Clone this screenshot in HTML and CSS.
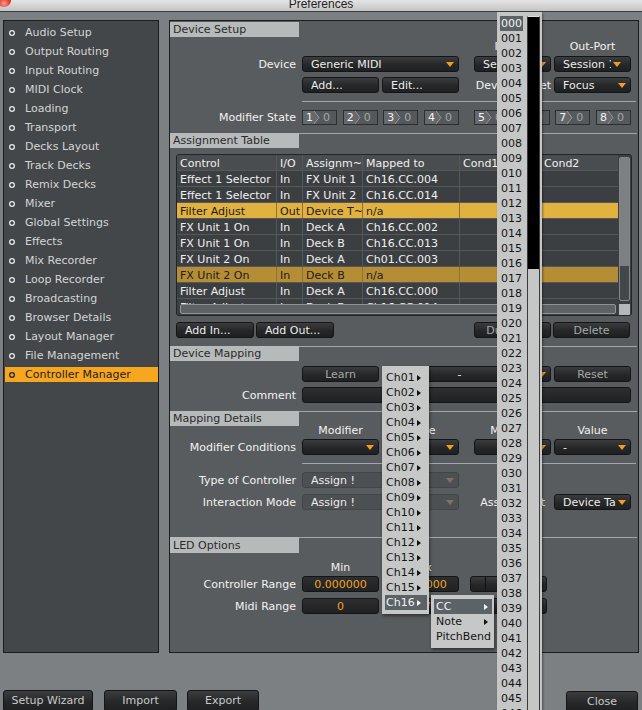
FILE: index.html
```html
<!DOCTYPE html>
<html>
<head>
<meta charset="utf-8">
<title>Preferences</title>
<link rel="stylesheet" href="styles.css">
</head>
<body>
<div class="window">
  <div class="titlebar"><span class="close-btn"></span>Preferences</div>
  <div class="main">
    <nav class="sidebar">
      <div class="nav-item"><span class="dot"></span>Audio Setup</div>
      <div class="nav-item"><span class="dot"></span>Output Routing</div>
      <div class="nav-item"><span class="dot"></span>Input Routing</div>
      <div class="nav-item"><span class="dot"></span>MIDI Clock</div>
      <div class="nav-item"><span class="dot"></span>Loading</div>
      <div class="nav-item"><span class="dot"></span>Transport</div>
      <div class="nav-item"><span class="dot"></span>Decks Layout</div>
      <div class="nav-item"><span class="dot"></span>Track Decks</div>
      <div class="nav-item"><span class="dot"></span>Remix Decks</div>
      <div class="nav-item"><span class="dot"></span>Mixer</div>
      <div class="nav-item"><span class="dot"></span>Global Settings</div>
      <div class="nav-item"><span class="dot"></span>Effects</div>
      <div class="nav-item"><span class="dot"></span>Mix Recorder</div>
      <div class="nav-item"><span class="dot"></span>Loop Recorder</div>
      <div class="nav-item"><span class="dot"></span>Broadcasting</div>
      <div class="nav-item"><span class="dot"></span>Browser Details</div>
      <div class="nav-item"><span class="dot"></span>Layout Manager</div>
      <div class="nav-item"><span class="dot"></span>File Management</div>
      <div class="nav-item active"><span class="dot"></span>Controller Manager</div>
    </nav>

    <section class="content">
      <!-- Device Setup -->
      <div class="sec-head first"><div class="sec-title">Device Setup</div><div class="sec-line"></div></div>
      <div class="frow r-ports"><div></div><div></div><div></div><div class="cap">In-Port</div><div class="cap">Out-Port</div></div>
      <div class="frow r-dev">
        <div class="lbl">Device</div>
        <div class="dd w2 span2"><span class="t">Generic MIDI</span></div>
        <div class="dd"><span class="t">Session 1</span></div>
        <div class="dd"><span class="t clip">Session 1</span></div>
      </div>
      <div class="frow r-add">
        <div></div>
        <div class="btn">Add...</div>
        <div class="btn">Edit...</div>
        <div class="lbl2">Device Target</div>
        <div class="dd"><span class="t">Focus</span></div>
      </div>
      <div class="sep"></div>
      <div class="frow r-mod">
        <div class="lbl">Modifier State</div>
        <div class="mods span2">
          <span class="mod"><b>1</b><svg class="chev" viewBox="0 0 6 13" width="6" height="13"><polygon points="0,0 5,6.5 0,13" fill="#66696b"/><polyline points="0,0 5,6.5 0,13" fill="none" stroke="#95989a"/></svg><em>0</em></span>
          <span class="mod"><b>2</b><svg class="chev" viewBox="0 0 6 13" width="6" height="13"><polygon points="0,0 5,6.5 0,13" fill="#66696b"/><polyline points="0,0 5,6.5 0,13" fill="none" stroke="#95989a"/></svg><em>0</em></span>
          <span class="mod"><b>3</b><svg class="chev" viewBox="0 0 6 13" width="6" height="13"><polygon points="0,0 5,6.5 0,13" fill="#66696b"/><polyline points="0,0 5,6.5 0,13" fill="none" stroke="#95989a"/></svg><em>0</em></span>
          <span class="mod"><b>4</b><svg class="chev" viewBox="0 0 6 13" width="6" height="13"><polygon points="0,0 5,6.5 0,13" fill="#66696b"/><polyline points="0,0 5,6.5 0,13" fill="none" stroke="#95989a"/></svg><em>0</em></span>
        </div>
        <div class="mods span2">
          <span class="mod"><b>5</b><svg class="chev" viewBox="0 0 6 13" width="6" height="13"><polygon points="0,0 5,6.5 0,13" fill="#66696b"/><polyline points="0,0 5,6.5 0,13" fill="none" stroke="#95989a"/></svg><em>0</em></span>
          <span class="mod"><b>6</b><svg class="chev" viewBox="0 0 6 13" width="6" height="13"><polygon points="0,0 5,6.5 0,13" fill="#66696b"/><polyline points="0,0 5,6.5 0,13" fill="none" stroke="#95989a"/></svg><em>0</em></span>
          <span class="mod"><b>7</b><svg class="chev" viewBox="0 0 6 13" width="6" height="13"><polygon points="0,0 5,6.5 0,13" fill="#66696b"/><polyline points="0,0 5,6.5 0,13" fill="none" stroke="#95989a"/></svg><em>0</em></span>
          <span class="mod"><b>8</b><svg class="chev" viewBox="0 0 6 13" width="6" height="13"><polygon points="0,0 5,6.5 0,13" fill="#66696b"/><polyline points="0,0 5,6.5 0,13" fill="none" stroke="#95989a"/></svg><em>0</em></span>
        </div>
      </div>

      <!-- Assignment Table -->
      <div class="sec-head s-assign"><div class="sec-title">Assignment Table</div><div class="sec-line"></div></div>
      <div class="table">
        <div class="tmain">
          <div class="rows">
            <div class="tr head"><span>Control</span><span>I/O</span><span>Assignm~</span><span>Mapped to</span><span>Cond1</span><span>Cond2</span></div>
            <div class="tr"><span>Effect 1 Selector</span><span>In</span><span>FX Unit 1</span><span>Ch16.CC.004</span><span></span><span></span></div>
            <div class="tr"><span>Effect 1 Selector</span><span>In</span><span>FX Unit 2</span><span>Ch16.CC.014</span><span></span><span></span></div>
            <div class="tr hl1"><span>Filter Adjust</span><span>Out</span><span>Device T~</span><span>n/a</span><span></span><span></span></div>
            <div class="tr"><span>FX Unit 1 On</span><span>In</span><span>Deck A</span><span>Ch16.CC.002</span><span></span><span></span></div>
            <div class="tr"><span>FX Unit 1 On</span><span>In</span><span>Deck B</span><span>Ch16.CC.013</span><span></span><span></span></div>
            <div class="tr"><span>FX Unit 2 On</span><span>In</span><span>Deck A</span><span>Ch01.CC.003</span><span></span><span></span></div>
            <div class="tr hl2"><span>FX Unit 2 On</span><span>In</span><span>Deck B</span><span>n/a</span><span></span><span></span></div>
            <div class="tr"><span>Filter Adjust</span><span>In</span><span>Deck A</span><span>Ch16.CC.000</span><span></span><span></span></div>
            <div class="tr"><span>Filter Adjust</span><span>In</span><span>Deck B</span><span>Ch16.CC.014</span><span></span><span></span></div>
          </div>
          <div class="hscroll"><div></div></div>
        </div>
        <div class="vcol">
          <div class="vtrack"><div class="vthumb"></div></div>
          <div class="corner"></div>
        </div>
      </div>
      <div class="btnrow">
        <div class="btn wb">Add In...</div>
        <div class="btn wb">Add Out...</div>
        <div class="btn c dup">Duplicate</div>
        <div class="btn c">Delete</div>
      </div>

      <!-- Device Mapping -->
      <div class="sec-head s-map"><div class="sec-title">Device Mapping</div><div class="sec-line"></div></div>
      <div class="frow r-learn">
        <div></div>
        <div class="btn c">Learn</div>
        <div class="dd w3 span2 ctr"><span class="t">-</span></div>
        <div class="btn c">Reset</div>
      </div>
      <div class="frow r-comment">
        <div class="lbl">Comment</div>
        <div class="fld wide span4"></div>
      </div>

      <!-- Mapping Details -->
      <div class="sec-head s-details"><div class="sec-title">Mapping Details</div><div class="sec-line"></div></div>
      <div class="frow r-caps"><div></div><div class="cap">Modifier</div><div class="cap">Value</div><div class="cap">Modifier</div><div class="cap">Value</div></div>
      <div class="frow r-conds">
        <div class="lbl">Modifier Conditions</div>
        <div class="dd"><span class="t"></span></div>
        <div class="dd"><span class="t"></span></div>
        <div class="dd"><span class="t"></span></div>
        <div class="dd"><span class="t">-</span></div>
      </div>
      <div class="sep s2"></div>
      <div class="frow r-type">
        <div class="lbl">Type of Controller</div>
        <div class="dd dis w2 span2"><span class="t">Assign !</span></div>
      </div>
      <div class="frow r-inter">
        <div class="lbl">Interaction Mode</div>
        <div class="dd dis w2 span2"><span class="t">Assign !</span></div>
        <div class="lbl3">Assignment</div>
        <div class="dd"><span class="t clip2">Device Target</span></div>
      </div>

      <!-- LED Options -->
      <div class="sec-head s-led"><div class="sec-title">LED Options</div><div class="sec-line"></div></div>
      <div class="frow r-minmax"><div></div><div class="cap">Min</div><div class="cap">Max</div></div>
      <div class="frow r-crange">
        <div class="lbl">Controller Range</div>
        <div class="fld">0.000000</div>
        <div class="fld">0.000000</div>
        <div class="toggle"><span class="sq"></span><span class="tl">Invert</span></div>
      </div>
      <div class="frow r-mrange">
        <div class="lbl">Midi Range</div>
        <div class="fld">0</div>
        <div class="fld">127</div>
        <div class="toggle"><span class="sq"></span><span class="tl">Invert</span></div>
      </div>
    </section>
  </div>

  <div class="footer">
    <div class="fbtn wiz">Setup Wizard</div>
    <div class="fbtn imp">Import</div>
    <div class="fbtn exp">Export</div>
    <div class="fbtn cls">Close</div>
  </div>

  <!-- popup: CC number list -->
  <div class="numlist">
    <div class="nums">
      <div class="sel">000</div><div>001</div><div>002</div><div>003</div><div>004</div><div>005</div><div>006</div><div>007</div><div>008</div><div>009</div>
      <div>010</div><div>011</div><div>012</div><div>013</div><div>014</div><div>015</div><div>016</div><div>017</div><div>018</div><div>019</div>
      <div>020</div><div>021</div><div>022</div><div>023</div><div>024</div><div>025</div><div>026</div><div>027</div><div>028</div><div>029</div>
      <div>030</div><div>031</div><div>032</div><div>033</div><div>034</div><div>035</div><div>036</div><div>037</div><div>038</div><div>039</div>
      <div>040</div><div>041</div><div>042</div><div>043</div><div>044</div><div>045</div><div>046</div>
    </div>
    <div class="nscroll"></div>
  </div>

  <!-- popup: channel menu -->
  <div class="menu chmenu">
    <div class="mi">Ch01<span class="arr"></span></div>
    <div class="mi">Ch02<span class="arr"></span></div>
    <div class="mi">Ch03<span class="arr"></span></div>
    <div class="mi">Ch04<span class="arr"></span></div>
    <div class="mi">Ch05<span class="arr"></span></div>
    <div class="mi">Ch06<span class="arr"></span></div>
    <div class="mi">Ch07<span class="arr"></span></div>
    <div class="mi">Ch08<span class="arr"></span></div>
    <div class="mi">Ch09<span class="arr"></span></div>
    <div class="mi">Ch10<span class="arr"></span></div>
    <div class="mi">Ch11<span class="arr"></span></div>
    <div class="mi">Ch12<span class="arr"></span></div>
    <div class="mi">Ch13<span class="arr"></span></div>
    <div class="mi">Ch14<span class="arr"></span></div>
    <div class="mi">Ch15<span class="arr"></span></div>
    <div class="mi sel">Ch16<span class="arr"></span></div>
  </div>

  <!-- popup: message type submenu -->
  <div class="menu submenu">
    <div class="mi sel">CC<span class="arr"></span></div>
    <div class="mi">Note<span class="arr"></span></div>
    <div class="mi">PitchBend</div>
  </div>
</div>
</body>
</html>
```

FILE: styles.css
```css
* { box-sizing: border-box; }
html, body { margin: 0; padding: 0; }
body {
  width: 642px;
  height: 710px;
  overflow: hidden;
  background: #7c8082;
  font-family: "DejaVu Sans", sans-serif;
  font-size: 11px;
  color: #f0f0f0;
}
.window { position: relative; width: 642px; height: 710px; overflow: hidden; }

/* title bar */
.titlebar {
  position: relative;
  height: 12px;
  border-bottom: 1px solid #3c3c3c;
  background: linear-gradient(#e4e4e4, #c4c4c4);
  text-align: center;
  font-family: "Liberation Sans", sans-serif;
  font-size: 12px;
  line-height: 8px;
  color: #1e1e1e;
}
.close-btn {
  position: absolute;
  left: -3px;
  top: -7px;
  width: 14px;
  height: 14px;
  border-radius: 50%;
  background: radial-gradient(circle at 50% 75%, #ff9a8e, #d8281c 55%, #8c0c08);
}

.main { display: flex; gap: 10px; padding: 8px 3px 0 3px; }

/* sidebar */
.sidebar {
  width: 156px;
  height: 633px;
  border: 1px solid #1c1d1e;
  background: #43474a;
  padding: 4px 0 0 1px;
}
.nav-item {
  display: flex;
  align-items: center;
  height: 15px;
  margin-bottom: 4px;
  padding-left: 4px;
  color: #d4d5d5;
  white-space: nowrap;
}
.nav-item .dot {
  flex: none;
  width: 6px;
  height: 6px;
  border-radius: 50%;
  margin-right: 10px;
  background: radial-gradient(circle, #3a3d3f 0 1.3px, #e4e4e4 1.9px);
}
.nav-item.active { background: #f6a71f; color: #1e1e1e; }
.nav-item.active .dot { background: radial-gradient(circle, #f6a71f 0 1.3px, #262626 1.9px); }

/* content panel */
.content {
  width: 470px;
  height: 633px;
  border: 1px solid #1c1d1e;
  background: #595c5e;
  padding-top: 1px;
}
.sec-head { display: flex; height: 15px; }
.sec-title {
  width: 129px;
  background: #b7babb;
  color: #2a2a2a;
  padding-left: 3px;
  line-height: 16px;
  white-space: nowrap;
}
.sec-line { flex: 1; border-top: 1px solid #a3a6a8; margin-right: 1px; }
.sec-head.first .sec-line { border-top-color: transparent; }
.s-assign { margin-top: 8px; }
.s-map { margin-top: 8px; }
.s-details { margin-top: 8px; }
.s-led { margin-top: 27px; height: 16px; }
.s-led .sec-title { line-height: 17px; }

.sep { margin: 8px 2px 0 132px; border-top: 1px solid #a3a6a8; height: 1px; }

.frow {
  display: grid;
  grid-template-columns: 132px 80px 92px 80px 77px;
  align-items: center;
  height: 16px;
}
.span2 { grid-column: span 2; }
.span4 { grid-column: span 4; }
.lbl { text-align: right; padding-right: 6px; white-space: nowrap; color: #f2f2f2; }
.lbl2 { width: 77px; text-align: right; white-space: nowrap; color: #f2f2f2; }
.lbl3 { width: 77px; text-align: right; padding-right: 6px; white-space: nowrap; color: #f2f2f2; }
.cap { width: 77px; text-align: center; white-space: nowrap; color: #f2f2f2; }

.r-ports { margin-top: 3px; height: 13px; }
.r-dev { margin-top: 3px; }
.r-add { margin-top: 5px; }
.r-mod { margin-top: 8px; height: 15px; }
.r-learn { margin-top: 5px; }
.r-comment { margin-top: 5px; }
.r-caps { margin-top: -3px; height: 14px; }
.r-conds { margin-top: 2px; }
.r-type { margin-top: 8px; }
.r-inter { margin-top: 6px; }
.r-minmax { margin-top: 8px; height: 13px; }
.r-crange { margin-top: 2px; }
.r-mrange { margin-top: 6px; }

/* controls */
.btn, .dd, .fld, .fbtn, .toggle {
  height: 16px;
  border: 1px solid #141516;
  border-radius: 3px;
  background: linear-gradient(#3a3c3e, #252728 55%, #1f2021);
  color: #ececec;
  white-space: nowrap;
  overflow: hidden;
}
.btn { width: 77px; padding-left: 8px; line-height: 15px; }
.btn.c { text-align: center; padding-left: 0; color: #a6a9ab; }
.btn.wb { width: 78px; }

.dd { width: 77px; display: flex; align-items: center; padding: 0 4px 0 8px; }
.dd .t { flex: 1; overflow: hidden; white-space: nowrap; line-height: 15px; }
.dd .t.clip { flex: none; width: 48px; }
.dd .t.clip2 { flex: none; width: 53px; }
.dd::after {
  content: "";
  flex: none;
  margin-left: 2px;
  border-left: 4px solid transparent;
  border-right: 4px solid transparent;
  border-top: 5px solid #f39b1e;
}
.dd.w2 { width: 157px; }
.dd.w3 { width: 169px; }
.dd.ctr .t { text-align: center; padding-right: 8px; }
.dd.dis { background: #4d5052; border-color: #434648; }
.dd.dis::after { border-top-color: #7f735f; }

.fld {
  width: 77px;
  text-align: center;
  line-height: 15px;
  color: #f3a41f;
  background: linear-gradient(#2c2e30, #1f2122);
}
.fld.wide { width: 329px; }

.toggle { width: 77px; margin-left: -4px; display: flex; color: #dcdcdc; }
.toggle .sq { width: 15px; border-right: 1px solid #111; }
.toggle .tl { flex: 1; text-align: center; line-height: 15px; }

/* modifier state */
.mods { width: 157px; display: flex; justify-content: space-between; }
.mod {
  width: 35px;
  height: 15px;
  border: 1px solid #2c2e2f;
  background: #56595b;
  display: flex;
  align-items: center;
}
.mod b { width: 11px; height: 13px; background: #66696b; color: #f4f4f4; font-weight: normal; padding-left: 3px; line-height: 14px; }
.mod .chev { flex: none; display: block; }
.mod em { font-style: normal; color: #a3a6a8; margin-left: 3px; line-height: 14px; }

/* table */
.table {
  margin: 6px 0 0 6px;
  width: 456px;
  height: 162px;
  border: 1px solid #232527;
  border-radius: 3px;
  display: flex;
  background: #3c3f41;
  overflow: hidden;
}
.tmain { width: 441px; }
.rows { height: 149px; overflow: hidden; }
.tr {
  display: grid;
  grid-template-columns: 100px 26px 60px 97px 81px 77px;
  height: 16px;
  border-bottom: 1px solid #55585a;
}
.tr > span {
  padding-left: 3px;
  border-right: 1px solid #55585a;
  line-height: 17px;
  white-space: nowrap;
  overflow: hidden;
}
.tr > span:last-child { border-right: none; }
.tr.head { background: #4a4d4f; }
.tr.hl1 { background: #e2b240; color: #1c1c1c; }
.tr.hl2 { background: #b58d35; color: #1c1c1c; }
.tr.hl1 > span, .tr.hl2 > span { border-right-color: #8e7434; }
.hscroll { height: 11px; padding: 0 2px 0 3px; }
.hscroll div { height: 10px; border: 1px solid #909395; border-radius: 2px; background: #5f6264; }
.vcol { width: 13px; padding: 2px 1px 0 1px; }
.vtrack { height: 144px; border: 1px solid #85888a; border-radius: 2px; background: #43474a; overflow: hidden; }
.vthumb { height: 108px; background: #7d8083; }
.corner { margin-top: 3px; height: 11px; background: #b5b8b9; }

.btnrow { display: flex; gap: 2px; margin-top: 6px; padding-left: 6px; height: 16px; }
.btnrow .dup { margin-left: 138px; }

/* footer */
.footer { display: flex; margin-top: 37px; padding: 0 4px 0 3px; }
.fbtn { height: 22px; line-height: 20px; text-align: center; color: #c9cacb; }
.wiz { width: 90px; }
.imp { width: 73px; margin-left: 11px; }
.exp { width: 72px; margin-left: 10px; }
.cls { width: 72px; margin-left: auto; margin-top: 1px; }

/* popups */
.numlist {
  position: absolute;
  left: 497px;
  top: 12px;
  width: 45px;
  height: 710px;
  background: #c5c7c7;
  display: flex;
  color: #141414;
  box-shadow: 1px 1px 2px rgba(0, 0, 0, 0.4);
}
.nums { padding: 4px 0 0 3px; width: 27px; }
.nums div { height: 15px; line-height: 15px; width: 23px; padding-left: 1px; }
.nums .sel { background: #5b6366; color: #f2f2f2; }
.nscroll {
  margin: 4px 0 0 3px;
  width: 13px;
  border-top: 1px solid #e0e0e0;
  border-left: 1px solid #3a3a3a;
  border-right: 1px solid #3a3a3a;
  background: linear-gradient(#000 0 252px, #c5c7c7 252px);
}

.menu {
  position: absolute;
  background: #c6c8c8;
  color: #141414;
  padding: 4px 0;
  box-shadow: 1px 2px 3px rgba(0, 0, 0, 0.45);
}
.chmenu { left: 382px; top: 366px; width: 47px; }
.mi {
  height: 15px;
  line-height: 15px;
  margin: 0 2px 0 3px;
  padding: 0 6px 0 1px;
  display: flex;
  justify-content: space-between;
  align-items: center;
  white-space: nowrap;
}
.mi .arr {
  width: 0;
  height: 0;
  border-left: 4px solid #111;
  border-top: 3.5px solid transparent;
  border-bottom: 3.5px solid transparent;
}
.mi.sel { background: #5b6366; color: #f2f2f2; }
.mi.sel .arr { border-left-color: #f2f2f2; }
.submenu { left: 431px; top: 595px; width: 63px; }
.submenu .mi { padding: 0 4px 0 2px; }
```
